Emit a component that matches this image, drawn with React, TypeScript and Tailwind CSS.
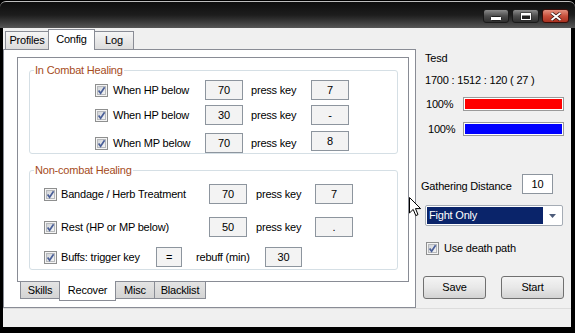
import React from 'react'

// ── 小元件 ──────────────────────────────────────
function CheckBox() {
  return (
    <svg width="13" height="13" viewBox="0 0 13 13" className="shrink-0">
      <defs>
        <linearGradient id="cbFill" x1="0" y1="0" x2="1" y2="1">
          <stop offset="0" stopColor="#cfd2d6" />
          <stop offset="1" stopColor="#f7f7f7" />
        </linearGradient>
      </defs>
      <rect x="0.5" y="0.5" width="12" height="12" fill="#f4f4f4" stroke="#8e8f8f" />
      <rect x="2.5" y="2.5" width="8" height="8" fill="url(#cbFill)" stroke="#b7b9bc" />
      <path d="M3.6 6.4 L5.6 9.2 L9.6 3.2" fill="none" stroke="#4a5f98" strokeWidth="1.7" />
    </svg>
  )
}

function Box({ v, className = 'w-[38px] h-[20px] bg-[#f3f3f3]' }: { v: string; className?: string }) {
  return (
    <div className={`${className} shrink-0 border border-[#8d959e] flex items-center justify-center`}>{v}</div>
  )
}

function CombatRow({ label, val, k, mt, keyShift = '' }: { label: string; val: string; k: string; mt: string; keyShift?: string }) {
  return (
    <div className={`flex items-center h-[20px] pl-[65px] ${mt}`}>
      <CheckBox />
      <span className="ml-[5px] w-[92px]">{label}</span>
      <Box v={val} />
      <span className="ml-[8px] w-[60px]">press key</span>
      <Box v={k} className={`w-[38px] h-[20px] bg-[#f3f3f3] ${keyShift}`} />
    </div>
  )
}

function HealRow({ label, val, k, mt }: { label: string; val: string; k: string; mt: string }) {
  return (
    <div className={`flex items-center h-[20px] pl-[14px] ${mt}`}>
      <CheckBox />
      <span className="ml-[4px] w-[148px]">{label}</span>
      <Box v={val} />
      <span className="ml-[9px] w-[59px]">press key</span>
      <Box v={k} />
    </div>
  )
}

function TopTab({ label, className }: { label: string; className: string }) {
  return (
    <div className={`${className} h-[18px] border border-b-0 border-[#898c95] bg-gradient-to-b from-[#f5f5f5] to-[#dcdcdc] flex items-center justify-center`}>
      {label}
    </div>
  )
}

function BottomTab({ label, className }: { label: string; className: string }) {
  return (
    <div className={`${className} h-[17px] border border-t-0 border-[#898c95] bg-gradient-to-b from-[#e4e4e4] to-[#d4d4d4] flex items-center justify-center`}>
      {label}
    </div>
  )
}

function Bar({ color }: { color: string }) {
  return (
    <div className="w-[101px] h-[14px] border border-[#9a9a9a] bg-white p-[1px]">
      <div className={`h-full ${color}`} />
    </div>
  )
}

// ── 主元件 ────────────────────────────────────────
export default function App() {
  return (
    <div className="relative w-[575px] h-[333px] bg-black overflow-hidden flex flex-col text-[11px] leading-[13px] tracking-[-0.2px] text-black font-['Liberation_Sans',Arial,sans-serif]">

      {/* 標題列 */}
      <div className="mt-[1px] h-[27px] shrink-0 flex justify-end items-start pt-[7px] pr-[6px] gap-[3px] border-t border-[#bdbdbd] rounded-t-[6px] bg-gradient-to-b from-[#0e0e0e] via-[#1d1d1d] to-[#575757]">
        <div className="w-[26px] h-[14px] rounded-[3px] border border-[#1a1a1a] bg-gradient-to-b from-[#8c8c8c] via-[#4d4d4d] to-[#2f2f2f] flex items-center justify-center">
          <svg width="12" height="5" viewBox="0 0 12 5" className="mt-[5px]">
            <rect x="0.5" y="0.5" width="11" height="4" rx="1" fill="#ffffff" stroke="#202020" />
          </svg>
        </div>
        <div className="w-[27px] h-[14px] rounded-[3px] border border-[#1a1a1a] bg-gradient-to-b from-[#8c8c8c] via-[#4d4d4d] to-[#2f2f2f] flex items-center justify-center">
          <svg width="12" height="9" viewBox="0 0 12 9">
            <rect x="0.5" y="0.5" width="11" height="8" fill="#202020" />
            <rect x="1.5" y="1.5" width="9" height="6" fill="none" stroke="#ffffff" strokeWidth="1" />
            <rect x="2" y="2" width="8" height="1.5" fill="#ffffff" />
          </svg>
        </div>
        <div className="w-[27px] h-[14px] rounded-[3px] border border-[#3a0d08] bg-gradient-to-b from-[#e3917f] via-[#c8503c] to-[#a9301f] flex items-center justify-center">
          <svg width="12" height="9" viewBox="0 0 12 9">
            <path d="M1.5 1 L10.5 8 M10.5 1 L1.5 8" stroke="#3a1a14" strokeWidth="3.4" />
            <path d="M1.5 1 L10.5 8 M10.5 1 L1.5 8" stroke="#ffffff" strokeWidth="1.8" />
          </svg>
        </div>
      </div>

      {/* 視窗內容 */}
      <div className="flex-1 ml-[3px] mr-[4px] mb-[6px] bg-[#f0f0f0] flex flex-col">
        <div className="h-[280px] flex">

          {/* 外層分頁 */}
          <div className="w-[413px] flex flex-col">
            <div className="h-[21px] flex items-end pl-[2px] relative z-10">
              <TopTab label="Profiles" className="w-[44px]" />
              <div className="-ml-px -mb-px w-[47px] h-[21px] bg-white border border-b-0 border-[#898c95] flex items-center justify-center pb-[2px]">
                Config
              </div>
              <TopTab label="Log" className="-ml-px w-[40px]" />
            </div>

            <div className="flex-1 border border-[#898c95] bg-white">
              {/* 內層分頁 */}
              <div className="ml-[13px] mt-[7px]">
                <div className="w-[392px] h-[225px] border border-[#898c95] bg-white">

                  <div className="relative ml-[11px] mt-[12px] w-[369px] h-[84px] border border-[#d5dfe5] rounded-[3px]">
                    <span className="absolute left-[4px] top-[-7px] px-[1px] bg-white text-[#a54b1b]">In Combat Healing</span>
                    <CombatRow label="When HP below" val="70" k="7" mt="mt-[9px]" />
                    <CombatRow label="When HP below" val="30" k="-" mt="mt-[5px]" />
                    <CombatRow label="When MP below" val="70" k="8" mt="mt-[8px]" keyShift="-mt-[4px]" />
                  </div>

                  <div className="relative ml-[11px] mt-[16px] w-[369px] h-[100px] border border-[#d5dfe5] rounded-[3px]">
                    <span className="absolute left-[4px] top-[-7px] px-[1px] bg-white text-[#a54b1b]">Non-combat Healing</span>
                    <HealRow label="Bandage / Herb Treatment" val="70" k="7" mt="mt-[13px]" />
                    <HealRow label="Rest (HP or MP below)" val="50" k="." mt="mt-[13px]" />
                    <div className="flex items-center h-[20px] pl-[14px] mt-[10px]">
                      <CheckBox />
                      <span className="ml-[4px] w-[95px]">Buffs: trigger key</span>
                      <Box v="=" className="w-[26px] h-[20px] bg-[#f3f3f3]" />
                      <span className="ml-[14px] w-[69px]">rebuff (min)</span>
                      <Box v="30" className="w-[37px] h-[20px] bg-[#f3f3f3]" />
                    </div>
                  </div>
                </div>

                <div className="flex items-start pl-[3px]">
                  <BottomTab label="Skills" className="w-[40px]" />
                  <div className="relative z-10 -ml-px -mt-px w-[57px] h-[20px] bg-white border border-t-0 border-[#898c95] flex items-center justify-center">
                    Recover
                  </div>
                  <BottomTab label="Misc" className="-ml-px w-[40px]" />
                  <BottomTab label="Blacklist" className="-ml-px w-[52px]" />
                </div>
              </div>
            </div>
          </div>

          {/* 右側資訊 */}
          <div className="flex-1 flex flex-col">
            <div className="pl-[9px] mt-[24px]">Tesd</div>
            <div className="pl-[9px] mt-[9px]">1700 : 1512 : 120 ( 27 )</div>
            <div className="flex items-center h-[14px] mt-[10px]">
              <span className="pl-[10px] w-[47px]">100%</span>
              <Bar color="bg-[#ff0000]" />
            </div>
            <div className="flex items-center h-[14px] mt-[11px]">
              <span className="pl-[12px] w-[47px]">100%</span>
              <Bar color="bg-[#0000ff]" />
            </div>

            <div className="flex items-center h-[20px] mt-[38px] pl-[5px]">
              <span className="w-[101px] pt-[4px]">Gathering Distance</span>
              <Box v="10" className="w-[31px] h-[20px] bg-white" />
            </div>

            <div className="ml-[9px] mt-[11px] w-[138px] h-[21px] border border-[#a5acb5] rounded-[2px] bg-white flex items-center p-[1px]">
              <div className="w-[116px] h-full bg-[#0a246a] text-white flex items-center pl-[2px]">Fight Only</div>
              <div className="flex-1 flex items-center justify-center">
                <svg width="7" height="4" viewBox="0 0 7 4">
                  <path d="M0 0 L7 0 L3.5 4 Z" fill="#4d5c7a" />
                </svg>
              </div>
            </div>

            <div className="flex items-center h-[13px] mt-[16px] ml-[10px]">
              <CheckBox />
              <span className="ml-[5px]">Use death path</span>
            </div>

            <div className="flex mt-[21px] ml-[7px] gap-[15px]">
              <div className="w-[63px] h-[23px] rounded-[3px] border border-[#707070] bg-gradient-to-b from-[#f4f4f4] via-[#e8e8e8] to-[#d3d3d3] flex items-center justify-center">
                Save
              </div>
              <div className="w-[63px] h-[23px] rounded-[3px] border border-[#707070] bg-gradient-to-b from-[#f4f4f4] via-[#e8e8e8] to-[#d3d3d3] flex items-center justify-center">
                Start
              </div>
            </div>
          </div>
        </div>

        <div className="flex-1 border-t border-[#dcdcdc]" />
      </div>

      {/* 滑鼠游標 */}
      <svg className="absolute left-[409px] top-[197px]" width="13" height="20" viewBox="0 0 13 20">
        <path d="M0.5 0.5 L0.5 16 L4.2 12.4 L6.8 18.6 L9 17.6 L6.5 11.6 L11.6 11.6 Z" fill="#ffffff" stroke="#000000" strokeWidth="1" strokeLinejoin="miter" />
      </svg>
    </div>
  )
}
